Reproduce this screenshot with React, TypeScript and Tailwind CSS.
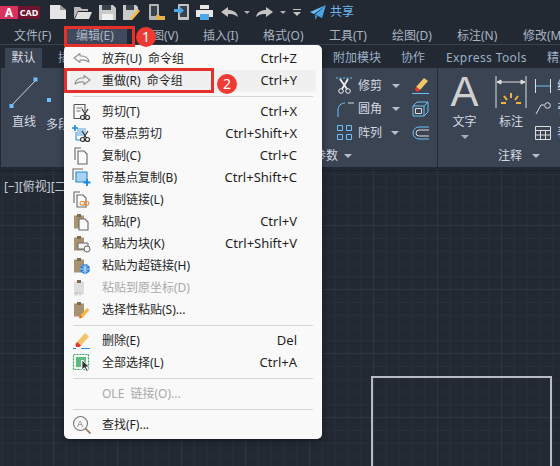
import type { ReactNode } from 'react';

const FONT = "font-['Noto_Sans','Noto_Sans_CJK_SC',sans-serif]";

type Kind =
  | 'undo' | 'redo' | 'cut' | 'cutBase' | 'copy' | 'copyBase' | 'copyLink' | 'paste'
  | 'pasteBlock' | 'pasteLink' | 'pasteOrigin' | 'pasteSpecial' | 'erase' | 'selectAll' | 'find';

interface MenuRow {
  label?: string;
  shortcut?: string;
  icon?: Kind;
  disabled?: boolean;
  active?: boolean;
}

const menuRows: MenuRow[] = [
  { label: '放弃(U) 命令组', shortcut: 'Ctrl+Z', icon: 'undo' },
  { label: '重做(R) 命令组', shortcut: 'Ctrl+Y', icon: 'redo', active: true },
  {},
  { label: '剪切(T)', shortcut: 'Ctrl+X', icon: 'cut' },
  { label: '带基点剪切', shortcut: 'Ctrl+Shift+X', icon: 'cutBase' },
  { label: '复制(C)', shortcut: 'Ctrl+C', icon: 'copy' },
  { label: '带基点复制(B)', shortcut: 'Ctrl+Shift+C', icon: 'copyBase' },
  { label: '复制链接(L)', icon: 'copyLink' },
  { label: '粘贴(P)', shortcut: 'Ctrl+V', icon: 'paste' },
  { label: '粘贴为块(K)', shortcut: 'Ctrl+Shift+V', icon: 'pasteBlock' },
  { label: '粘贴为超链接(H)', icon: 'pasteLink' },
  { label: '粘贴到原坐标(D)', icon: 'pasteOrigin', disabled: true },
  { label: '选择性粘贴(S)...', icon: 'pasteSpecial' },
  {},
  { label: '删除(E)', shortcut: 'Del', icon: 'erase' },
  { label: '全部选择(L)', shortcut: 'Ctrl+A', icon: 'selectAll' },
  {},
  { label: 'OLE 链接(O)...', disabled: true },
  {},
  { label: '查找(F)...', icon: 'find' },
];

function Scissors() {
  return (
    <g stroke="#333" fill="none" strokeWidth="1.2">
      <circle cx="10.5" cy="15.5" r="2" />
      <circle cx="15.5" cy="15.5" r="2" />
      <path d="M11.5 14L16 7M14.5 14L10 7" />
    </g>
  );
}

function Clip({ fill = '#a8926f' }: { fill?: string }) {
  return (
    <>
      <path d="M2 3.5h10v13H2z" fill={fill} />
      <path d="M5 2h4v3H5z" fill="#7d6b50" />
    </>
  );
}

function MenuIcon({ kind }: { kind: Kind }) {
  let body: ReactNode = null;
  if (kind === 'undo') body = <path d="M8 4.500L2 9l6 4.500V11c3.500-.5 6 0 9 2-.5-4-4-6.500-9-6z" fill="none" stroke="#8f8f8f" strokeWidth="1.1" strokeLinejoin="round" />;
  if (kind === 'redo') body = <path d="M12 4.500L18 9l-6 4.500V11c-3.500-.5-6 0-9 2 .5-4 4-6.500 9-6z" fill="none" stroke="#8f8f8f" strokeWidth="1.1" strokeLinejoin="round" />;
  if (kind === 'cut') body = (
    <>
      <path d="M2 2.500h11v7M2 2.500v14h6" fill="none" stroke="#555" strokeWidth="1.1" />
      <path d="M4.500 6h6M4.500 9h4" stroke="#777" />
      <Scissors />
    </>
  );
  if (kind === 'cutBase') body = (
    <>
      <path d="M5 4h9v8H5z" fill="#a9cdea" />
      <path d="M3 1v6M0 4h6" stroke="#1789e0" strokeWidth="1.6" />
      <path d="M4 8v8h4" stroke="#1789e0" fill="none" />
      <Scissors />
    </>
  );
  if (kind === 'copy') body = (
    <>
      <path d="M3 14V2h6" fill="none" stroke="#666" strokeWidth="1.1" />
      <path d="M6 5h6l3 3v10H6z" fill="#fafafa" stroke="#666" strokeWidth="1.1" />
    </>
  );
  if (kind === 'copyBase') body = (
    <>
      <path d="M1 12V1h10" fill="none" stroke="#666" strokeWidth="1.1" />
      <path d="M4 4h11v10H4z" fill="#a9d2f2" stroke="#1e88d8" strokeWidth="1.1" />
      <path d="M15 11v7M11.500 14.500h7" stroke="#1789e0" strokeWidth="1.8" />
    </>
  );
  if (kind === 'copyLink') body = (
    <>
      <path d="M2 13V2h6" fill="none" stroke="#666" strokeWidth="1.1" />
      <path d="M5 5h6l3 3v9H5z" fill="#fafafa" stroke="#666" strokeWidth="1.1" />
      <rect x="8" y="11.5" width="5" height="3.6" rx="1.8" fill="none" stroke="#e8893a" strokeWidth="1.1" />
      <rect x="12" y="11.5" width="5" height="3.6" rx="1.8" fill="none" stroke="#e8893a" strokeWidth="1.1" />
    </>
  );
  if (kind === 'paste') body = (
    <>
      <Clip />
      <path d="M7 7h6l3 3v8H7z" fill="#fafafa" stroke="#666" strokeWidth="1.1" />
    </>
  );
  if (kind === 'pasteBlock') body = (
    <>
      <Clip />
      <path d="M6 9h10v6H6z" fill="#f4f4f4" stroke="#666" />
      <circle cx="15" cy="15" r="3" fill="#f4f4f4" stroke="#666" />
    </>
  );
  if (kind === 'pasteLink') body = (
    <>
      <Clip />
      <circle cx="13" cy="13" r="5" fill="#2b7fd4" />
      <path d="M8 13h10M13 8v10M10 9.500c2 2.400 4 2.400 6 0M10 16.500c2-2.400 4-2.400 6 0" stroke="#fff" strokeWidth="0.7" fill="none" />
    </>
  );
  if (kind === 'pasteOrigin') body = (
    <>
      <Clip fill="#dddddd" />
      <text x="2" y="18" fontSize="6" fill="#b5b5b5" fontFamily="Liberation Sans">XY</text>
    </>
  );
  if (kind === 'pasteSpecial') body = (
    <>
      <Clip />
      <path d="M8 16l7-8 2.400 2-7 8-3 .6z" fill="#f5b83d" />
      <path d="M7 18l1-2.500 2 1.800z" fill="#e03a3a" />
    </>
  );
  if (kind === 'erase') body = (
    <>
      <path d="M5 11l8-9 4 3.400-8 9z" fill="#f2c46a" />
      <path d="M3.500 13l1.600-2 4 3.400-1.500 1.600H4z" fill="#e8372f" />
      <path d="M1 17.500h3M9 17.500h9" stroke="#2a8ae0" strokeWidth="1.1" />
    </>
  );
  if (kind === 'selectAll') body = (
    <>
      <path d="M1.500 1.500h15v15h-15z" fill="none" stroke="#2ea65a" strokeDasharray="2 1" strokeWidth="1.2" />
      <path d="M4 4h10v10H4z" fill="#5dbb7f" />
      <path d="M9 7h3v7H9z" fill="#eaf6ee" />
      <path d="M10 7l0 10 2.500-2.400 2 4 1.600-.8-2-3.900h3.400z" fill="#333" stroke="#fff" strokeWidth="0.8" />
    </>
  );
  if (kind === 'find') body = (
    <>
      <circle cx="8.500" cy="8.500" r="7" fill="none" stroke="#777" strokeWidth="1.1" />
      <text x="5" y="11.8" fontSize="9" fill="#777" fontFamily="Liberation Sans">A</text>
      <path d="M13.500 13.500l5 5" stroke="#8a7350" strokeWidth="1.7" />
    </>
  );
  return (
    <svg width="20" height="20" viewBox="0 0 20 20" className="shrink-0">
      {body}
    </svg>
  );
}

function TitleIcons() {
  return (
    <div className="flex items-center h-6">
      <svg width="16" height="14" viewBox="0 0 16 14" className="ml-[10px]"><path d="M0 0h10l6 5v9H0z" fill="#e4e4e4" /><path d="M10 0l6 5h-6z" fill="#9a9a9a" /></svg>
      <svg width="18" height="13" viewBox="0 0 18 13" className="ml-2"><path d="M0 13V1h6l2 2h6v2H4z" fill="#b9b9b9" /><path d="M4 6h14l-3 7H1z" fill="#e0e0e0" /></svg>
      <svg width="17" height="15" viewBox="0 0 17 15" className="ml-[7px]"><path d="M0 0h14l3 3v12H0z" fill="#c9c9c9" /><path d="M3 0h9v5H3z" fill="#3a424e" /><path d="M3 9h11v6H3z" fill="#f1f1f1" /></svg>
      <svg width="17" height="15" viewBox="0 0 17 15" className="ml-[7px]"><path d="M0 0h13l2 2v6l-6 7H0z" fill="#c9c9c9" /><path d="M3 0h8v5H3z" fill="#3a424e" /><path d="M7 15l1-3 7-8 2 2-7 8z" fill="#f3b94a" /></svg>
      <svg width="16" height="16" viewBox="0 0 16 16" className="ml-[9px]"><rect x="0" y="0" width="10" height="16" rx="1" fill="#b4b4b4" /><path d="M2 2h6v10H2z" fill="#3a424e" /><path d="M7 11h3l1 1h5v4H7z" fill="#e6b04b" /></svg>
      <svg width="16" height="16" viewBox="0 0 16 16" className="ml-[9px]"><rect x="4" y="0" width="11" height="16" rx="1" fill="#c4c4c4" /><path d="M6 2h7v11H6z" fill="#3a424e" /><path d="M0 5h5V2l5 4.500-5 4.500V8H0z" fill="#4aa8e8" /></svg>
      <svg width="17" height="15" viewBox="0 0 17 15" className="ml-[6px]"><path d="M4 0h9v4H4z" fill="#e6e6e6" /><path d="M0 5h17v7H0z" fill="#e6e6e6" /><path d="M4 9h9v6H4z" fill="#4aa8e8" /></svg>
      <svg width="17" height="10" viewBox="0 0 17 10" className="ml-2"><path d="M7 0L0 5l7 5V7c4 0 7 .5 10 3-1-5-5-7-10-7z" fill="#c4c4c4" /></svg>
      <span className="ml-[6px] w-0 h-0 border-x-[3px] border-x-transparent border-t-[3px] border-t-[#b0b0b0]" />
      <svg width="17" height="10" viewBox="0 0 17 10" className="ml-[6px]"><path d="M10 0l7 5-7 5V7C6 7 3 7.500 0 10c1-5 5-7 10-7z" fill="#c4c4c4" /></svg>
      <span className="ml-[7px] w-0 h-0 border-x-[3px] border-x-transparent border-t-[3px] border-t-[#b0b0b0]" />
      <span className="ml-[7px] flex flex-col items-center gap-[2px]">
        <span className="w-2 h-px bg-[#c4c4c4]" />
        <span className="w-0 h-0 border-x-[4px] border-x-transparent border-t-[4px] border-t-[#c4c4c4]" />
      </span>
      <svg width="16" height="15" viewBox="0 0 16 15" className="ml-[9px]"><path d="M16 0L0 7l4 2z" fill="#6cbcf2" /><path d="M16 0L5 9.500 12 13z" fill="#4aa3e4" /><path d="M5 9.500V15l2.500-3.500z" fill="#3a88c4" /></svg>
      <span className="ml-1 text-xs text-[#6cb8ee]">共享</span>
    </div>
  );
}

const menus = [
  { label: '文件(F)', width: 'w-[62px]' },
  { label: '编辑(E)', width: 'w-[64px]' },
  { label: '视图(V)', width: 'w-[63px]' },
  { label: '插入(I)', width: 'w-[60px]' },
  { label: '格式(O)', width: 'w-[66px]' },
  { label: '工具(T)', width: 'w-[63px]' },
  { label: '绘图(D)', width: 'w-[65px]' },
  { label: '标注(N)', width: 'w-[66px]' },
  { label: '修改(M)', width: 'w-[62px]' },
];

function Caret({ className }: { className: string }) {
  return <span className={`w-0 h-0 border-x-[4px] border-x-transparent border-t-[4px] border-t-[#b8bec8] ${className}`} />;
}

function ToolRow({ icon, label, caretGap }: { icon: ReactNode; label: string; caretGap: string }) {
  return (
    <div className="h-[23.5px] flex items-center">
      <span className="w-[21px] flex items-center">{icon}</span>
      <span className="text-xs text-[#d5dae2]">{label}</span>
      <Caret className={caretGap} />
    </div>
  );
}

function Ribbon() {
  return (
    <div className="h-[99px] ml-px flex bg-[#3b4453] text-[#d5dae2] text-xs">
      {/* 左侧面板,大部分被菜单盖住 */}
      <div className="w-[437px] border-r border-[#252c37] flex flex-col">
        <div className="h-[77px] flex pt-[6px]">
          <div className="w-[44px] flex flex-col items-center pl-[2px]">
            <svg width="30" height="32" viewBox="0 0 30 32" className="mt-[3px]">
              <path d="M2 29L27 3" stroke="#cdd2da" />
              <rect x="24.500" y="0.500" width="4" height="4" fill="#6cc0f5" />
              <rect x="0.500" y="27" width="4" height="4" fill="#6cc0f5" />
            </svg>
            <span className="mt-[5px]">直线</span>
          </div>
          <div className="w-[56px] flex flex-col pl-[1px]">
            <span className="mt-[24px] ml-[1px] w-1 h-1 bg-[#6cc0f5]" />
            <span className="mt-[15px] whitespace-nowrap">多段线</span>
          </div>
          <div className="ml-[236px] w-[80px]">
            <ToolRow
              label="修剪"
              caretGap="ml-[10px]"
              icon={
                <svg width="17" height="18" viewBox="0 0 17 18" className="-ml-[1px]">
                  <path d="M0 1h16" stroke="#6cc0f5" strokeDasharray="2 1.500" />
                  <path d="M4 2l7 10M12 2L6 12" stroke="#eee" strokeWidth="1.8" />
                  <circle cx="5" cy="14" r="2.300" fill="none" stroke="#eee" />
                  <circle cx="12" cy="14" r="2.300" fill="none" stroke="#eee" />
                </svg>
              }
            />
            <ToolRow
              label="圆角"
              caretGap="ml-[10px]"
              icon={
                <svg width="17" height="17" viewBox="0 0 17 17">
                  <path d="M1 16V9c0-4 3-7 7-7" fill="none" stroke="#6cc0f5" />
                  <path d="M11 2h6" stroke="#ddd" />
                </svg>
              }
            />
            <ToolRow
              label="阵列"
              caretGap="ml-[9px]"
              icon={
                <svg width="15" height="15" viewBox="0 0 15 15">
                  <path d="M.5.5h5v5h-5zM9.500.5h5v5h-5zM.5 9.500h5v5h-5zM9.500 9.500h5v5h-5z" fill="none" stroke="#6cc0f5" />
                </svg>
              }
            />
          </div>
          <div className="ml-[-5px] w-[18px] flex flex-col">
            <span className="h-[23.5px] flex items-center">
              <svg width="17" height="17" viewBox="0 0 17 17">
                <path d="M4 10l8-9 4 3-8 9z" fill="#f2c46a" />
                <path d="M3 12l1.500-2 3.500 3-1.500 1.500H4z" fill="#e8372f" />
                <path d="M0 16.500h17" stroke="#6cc0f5" />
              </svg>
            </span>
            <span className="h-[23.5px] flex items-center">
              <svg width="17" height="16" viewBox="0 0 17 16">
                <path d="M1 5h11v10H1zM1 5l4-4h11v10l-4 4M12 5l4-4" fill="none" stroke="#6cc0f5" />
                <path d="M3.500 7.500h6v5h-6z" fill="none" stroke="#ddd" />
              </svg>
            </span>
            <span className="h-[23.5px] flex items-center">
              <svg width="17" height="14" viewBox="0 0 17 14">
                <path d="M17 1H7a6 6 0 0 0 0 12h10" fill="none" stroke="#6cc0f5" />
                <path d="M17 4H7a3 3 0 0 0 0 6h10" fill="none" stroke="#ddd" />
              </svg>
            </span>
          </div>
        </div>
        <div className="h-[22px] flex items-center justify-end pr-[85px] gap-[6px]">
          <span>参数</span>
          <Caret className="" />
        </div>
      </div>

      {/* 注释面板 */}
      <div className="flex-1 flex flex-col overflow-hidden">
        <div className="h-[77px] flex pt-[2px]">
          <div className="w-[51px] ml-[1px] flex flex-col items-center shrink-0">
            <span className="h-[43px] text-[42px] leading-[43px] text-[#d0d0d0] font-['Liberation_Sans',sans-serif]">A</span>
            <span className="mt-[1px]">文字</span>
            <Caret className="mt-[5px] !border-t-[#a8aeb8]" />
          </div>
          <div className="w-[42px] shrink-0 flex flex-col items-center">
            <svg width="32" height="34" viewBox="0 0 32 34" className="mt-[6px]">
              <path d="M1 0v32M31 0v32" stroke="#ddd" />
              <path d="M2 6h28M2 6l4-2v4zM30 6l-4-2v4z" stroke="#ddd" fill="#ddd" />
              <path d="M16 17v5M9 20l3 4M23 20l-3 4M6 27h5M21 27h5" stroke="#f2b43a" strokeWidth="2" />
            </svg>
            <span className="mt-[4px]">标注</span>
          </div>
          <div className="ml-[3px] pt-[4px] shrink-0">
            <div className="h-[23.5px] flex items-center gap-[6px]">
              <svg width="16" height="14" viewBox="0 0 16 14"><path d="M.5 0v14M15.500 0v14" stroke="#ddd" /><path d="M1 7h14" stroke="#6cc0f5" /></svg>
              <span className="whitespace-nowrap">线性</span>
            </div>
            <div className="h-[23.5px] flex items-center gap-[6px]">
              <svg width="16" height="15" viewBox="0 0 16 15"><circle cx="12.500" cy="3.500" r="2.800" fill="none" stroke="#ddd" /><path d="M9 3H6l-5 9" fill="none" stroke="#ddd" /></svg>
              <span className="whitespace-nowrap">引线</span>
            </div>
            <div className="h-[23.5px] flex items-center gap-[6px]">
              <svg width="16" height="14" viewBox="0 0 16 14"><path d="M.5.5h15v13H.5zM.5 4.500h15M.5 9h15M5.500 4.500v9M10.500 4.500v9" fill="none" stroke="#ddd" /></svg>
              <span className="whitespace-nowrap">表格</span>
            </div>
          </div>
        </div>
        <div className="h-[22px] flex items-center pl-[60px] gap-[10px]">
          <span>注释</span>
          <Caret className="" />
        </div>
      </div>
    </div>
  );
}

export default function App() {
  return (
    <div className={`relative w-[560px] h-[466px] overflow-hidden bg-[#222933] ${FONT}`}>
      {/* 标题栏 */}
      <div className="h-6 flex items-center">
        <div className="flex w-[40px] h-[13px] text-white font-bold">
          <span className="w-[18px] bg-[#d9315c] text-xs leading-[13px] text-center">A</span>
          <span className="flex-1 bg-[#6d1430] text-[9px] leading-[13px] text-center">CAD</span>
        </div>
        <TitleIcons />
      </div>

      {/* 菜单栏 */}
      <div className="h-[21px] border-b border-[#3a424f] flex text-xs text-[#a9b4c2] pl-[3px]">
        {menus.map((m, i) => (
          <span key={m.label} className={`${m.width} shrink-0 pt-[3px] whitespace-nowrap`}>
            <span className={`h-[17px] block leading-[17px] ${i === 1 ? 'ml-[2px] w-[60px] pl-[9px] bg-[#414a5c]' : 'pl-[11px]'}`}>
              {m.label}
            </span>
          </span>
        ))}
      </div>

      {/* 功能区标签 */}
      <div className="h-[23px] flex items-end text-xs text-[#9db0c6] pl-[5px] whitespace-nowrap">
        <span className="w-[37px] h-5 bg-[#3b4453] text-[#d8dce3] text-center leading-5 shrink-0">默认</span>
        <span className="ml-4 w-[270px] h-5 leading-5 shrink-0">插入</span>
        <span className="h-5 leading-5 ml-[5px] shrink-0">附加模块</span>
        <span className="h-5 leading-5 ml-[20px] shrink-0">协作</span>
        <span className="h-5 leading-5 ml-[21px] tracking-[0.4px] shrink-0">Express Tools</span>
        <span className="h-5 leading-5 ml-[20px] shrink-0">精选应用</span>
      </div>

      <Ribbon />

      {/* 绘图区 */}
      <div className="mt-[3px] h-[296px] relative border-t border-[#1c222b] bg-[#222933] bg-[linear-gradient(#2f3642_1px,transparent_1px),linear-gradient(90deg,#2f3642_1px,transparent_1px),linear-gradient(#282f3a_1px,transparent_1px),linear-gradient(90deg,#282f3a_1px,transparent_1px)] bg-[size:64px_64px,64px_64px,12.8px_12.8px,12.8px_12.8px] bg-[position:0_54px,53px_0,0_3px,2px_0]">
        <div className="pl-1 pt-[8px] text-xs text-[#c9ced6] whitespace-nowrap">[−][俯视][二维线框]</div>
        <div className="absolute left-[371px] top-[205px] w-[181px] h-[120px] border-2 border-[#b8bcc2]" />
      </div>

      {/* 编辑下拉菜单 */}
      <div className="absolute left-[64px] top-[45px] w-[258px] h-[394px] rounded-[5px] bg-[#f9f9f9] py-[3px] shadow-[0_2px_6px_rgba(0,0,0,0.4)] text-xs">
        {menuRows.map((row, i) =>
          row.label ? (
            <div
              key={i}
              className={`h-[22px] mx-[6px] flex items-center rounded-[4px] pl-[2px] pr-[19px] ${row.active ? 'bg-[#f0f0f0]' : ''} ${row.disabled ? 'text-[#a9a9a9]' : 'text-[#1f1f1f]'}`}
            >
              <span className="w-[30px] flex">{row.icon && <MenuIcon kind={row.icon} />}</span>
              <span className="whitespace-pre [word-spacing:3px]">{row.label}</span>
              <span className="ml-auto text-[13px]">{row.shortcut}</span>
            </div>
          ) : (
            <div key={i} className="h-[9px] mx-[9px] flex items-center">
              <div className="w-full h-px bg-[#d6d6d6]" />
            </div>
          )
        )}
      </div>

      {/* 标注:红框与序号 */}
      <div className="absolute left-[64px] top-[26px] w-[71px] h-[21px] border-[3px] border-[#e5302b]" />
      <div className="absolute left-[64px] top-[68px] w-[150px] h-[25px] border-[3px] border-[#e5302b]" />
      <div className="absolute left-[136px] top-[27px] w-[20px] h-[20px] rounded-full bg-[#ee3a32] text-white text-sm leading-[20px] text-center">1</div>
      <div className="absolute left-[217px] top-[74px] w-[20px] h-[20px] rounded-full bg-[#ee3a32] text-white text-sm leading-[20px] text-center">2</div>
    </div>
  );
}
